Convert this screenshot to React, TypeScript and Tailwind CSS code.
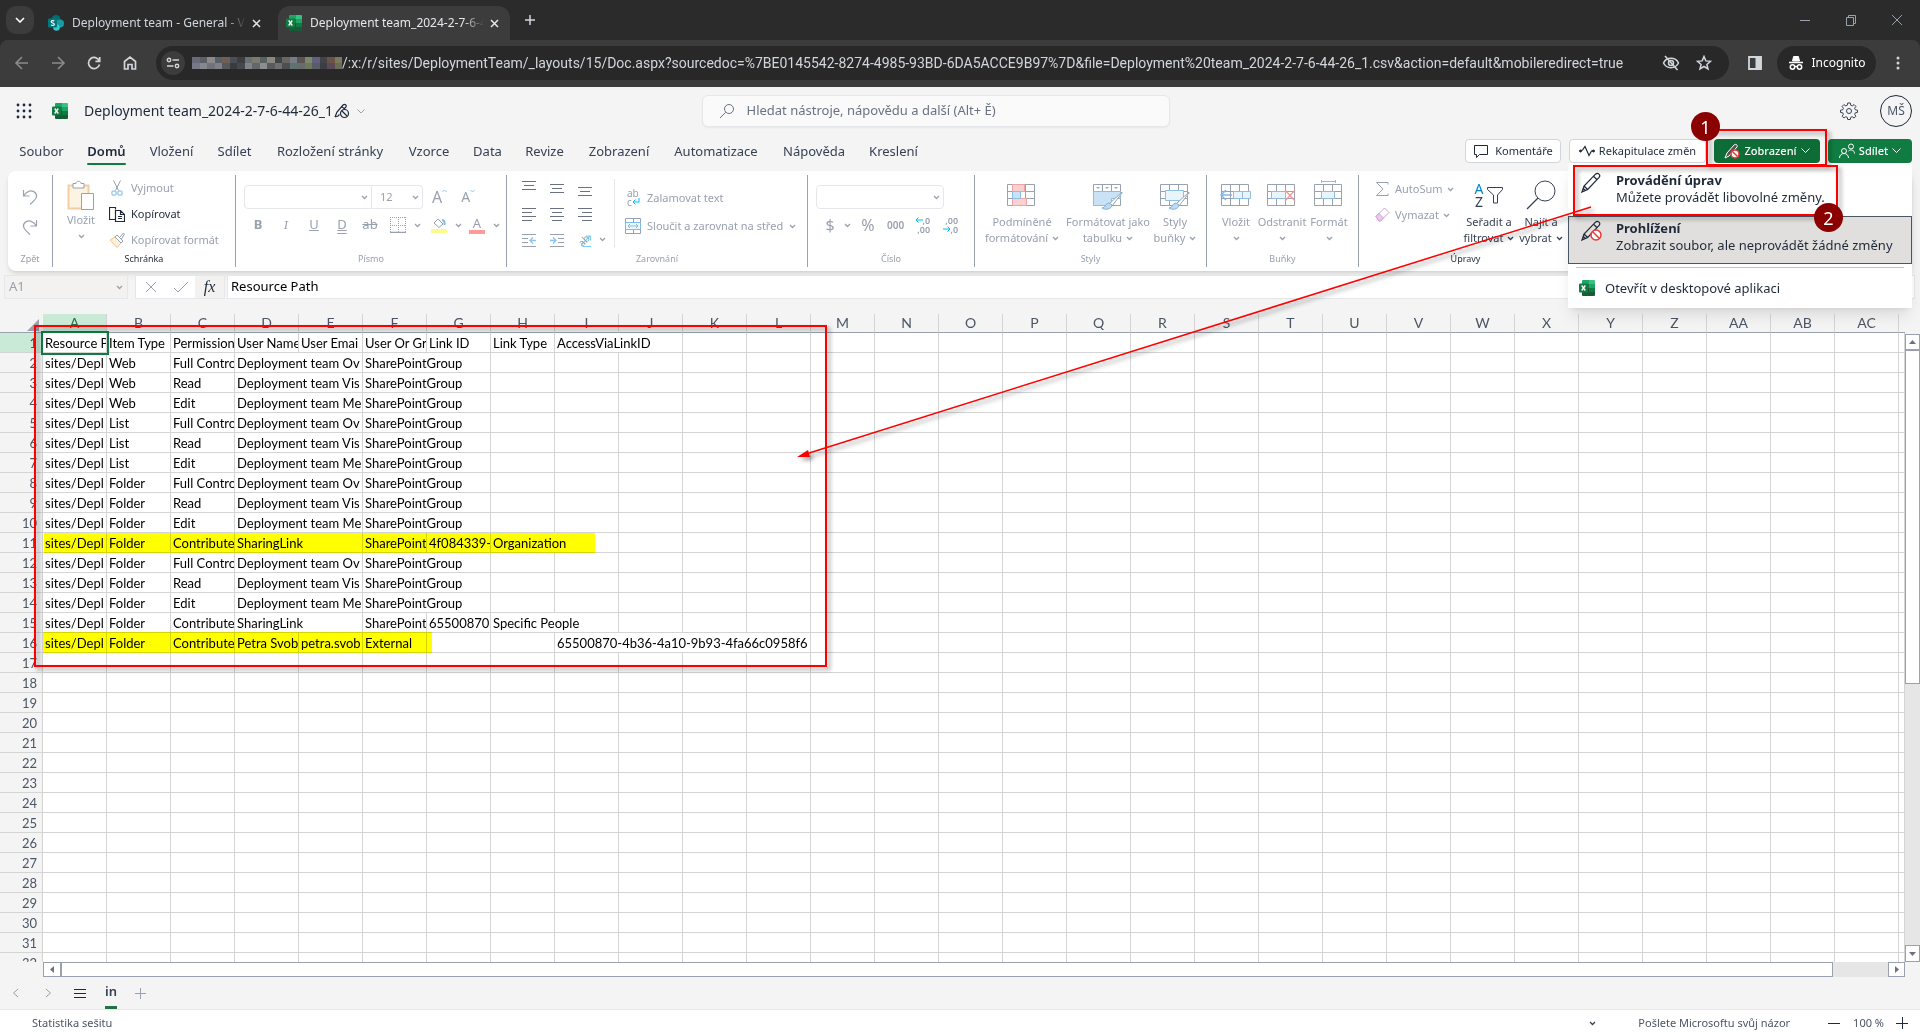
import type { ReactNode } from "react";

/* ---------- small shared pieces ---------- */

function Icon({
  w = 16,
  h = 16,
  className = "",
  children,
}: {
  w?: number;
  h?: number;
  className?: string;
  children: ReactNode;
}) {
  return (
    <svg
      width={w}
      height={h}
      viewBox={`0 0 ${w} ${h}`}
      fill="none"
      stroke="currentColor"
      strokeWidth="1"
      className={`shrink-0 ${className}`}
      aria-hidden="true"
    >
      {children}
    </svg>
  );
}

function Chevron({ className = "text-gray-400" }: { className?: string }) {
  return (
    <Icon w={7} h={5} className={className}>
      <path d="M1 1l2.500 2.500L6 1" strokeWidth="1.300" />
    </Icon>
  );
}

function ExcelLogo() {
  return (
    <Icon>
      <g stroke="none">
        <path d="M4 0h6v4H3V1a1 1 0 0 1 1-1z" fill="#21a366" />
        <path d="M10 0h5a1 1 0 0 1 1 1v3h-6z" fill="#33c481" />
        <path d="M3 4h7v4H3z" fill="#107c41" />
        <path d="M10 4h6v4h-6z" fill="#21a366" />
        <path d="M3 8h7v4H3z" fill="#185c37" />
        <path d="M10 8h6v4h-6z" fill="#107c41" />
        <path d="M3 12h13v3a1 1 0 0 1-1 1H4a1 1 0 0 1-1-1z" fill="#185c37" />
        <rect y="3.500" width="9" height="9" rx="1" fill="#107c41" />
      </g>
      <path d="M2.700 5.500l3.600 5M6.300 5.500l-3.600 5" stroke="#fff" strokeWidth="1.400" />
    </Icon>
  );
}

function SharePointLogo() {
  return (
    <Icon>
      <g stroke="none">
        <circle cx="8" cy="4.500" r="4.500" fill="#036c70" />
        <circle cx="12" cy="8.500" r="4" fill="#1a9ba1" />
        <circle cx="8.500" cy="12.500" r="3.300" fill="#37c6d0" />
        <rect y="3.500" width="9" height="9" rx="1" fill="#03787c" />
      </g>
      <path
        d="M6.300 6C5.500 5.300 3.200 5.300 3.200 6.800c0 1.600 3.100.8 3.100 2.500 0 1.500-2.500 1.400-3.300.6"
        stroke="#fff"
        strokeWidth="1.200"
      />
    </Icon>
  );
}

function Pencil({ blocked = false }: { blocked?: boolean }) {
  return (
    <Icon w={21} h={21}>
      <path
        d="M1 20l2-6L14.500 2.200c2.500-2.200 5.500.8 3.600 3.200L6.700 17.500 1 20zM3 14l3.700 3.500M12.500 4.300l3.600 3.500M1 20l3.500-1.500-2-2z"
        strokeWidth="1.200"
      />
      {blocked && (
        <g stroke="#e53935">
          <circle cx="15" cy="15" r="5" fill="#fff" strokeWidth="1.500" />
          <path d="M11.500 11.500l7 7" strokeWidth="1.500" />
        </g>
      )}
    </Icon>
  );
}

/* ---------- browser window ---------- */

function BrowserTab({
  icon,
  title,
  active = false,
}: {
  icon: ReactNode;
  title: string;
  active?: boolean;
}) {
  return (
    <div
      className={`flex h-[34px] w-[232px] items-center rounded-t-xl px-2 ${
        active ? "bg-[#3c3c3c] text-gray-200" : "text-gray-300"
      }`}
    >
      {icon}
      <span className="ml-2 w-[174px] overflow-hidden text-xs whitespace-nowrap [mask-image:linear-gradient(to_right,black_88%,transparent)]">
        {title}
      </span>
      <button aria-label="Close tab" className="ml-[6px] text-gray-200">
        <Icon w={9} h={9}>
          <path d="M1 1l7 7M8 1L1 8" strokeWidth="1.500" />
        </Icon>
      </button>
    </div>
  );
}

const mosaic = [
  "#6b6878", "#5c5f66", "#8a8a8c", "#57606b", "#6f5f58", "#4a4f55", "#3c3d3f", "#6a6f78", "#7d7a70", "#56635e",
  "#8a8780", "#3f4347", "#6a6560", "#777b84", "#5a5550", "#7a8a6c", "#62607a", "#424348", "#6b5348", "#7a7a5e",
  "#7a7888", "#86898c", "#70747a", "#7e8288", "#55585c", "#3a3b3d", "#46484c", "#80848a", "#63676a", "#8b8f94",
  "#5c5a58", "#6c7074", "#4c4e50", "#5e7470", "#6a6a6c", "#6c7a5c", "#5a5d66", "#3c3d40", "#5a4a58", "#6c6a58",
];

function Browser() {
  return (
    <header className="shrink-0 bg-[#2b2b2b] text-gray-300">
      <div className="flex h-10 items-end pl-[6px]">
        <button
          aria-label="Search tabs"
          className="mb-[6px] flex size-7 items-center justify-center rounded-[10px] bg-[#3c3c3c]"
        >
          <Icon w={10} h={6} className="text-white">
            <path d="M1 1l4 4 4-4" strokeWidth="1.600" />
          </Icon>
        </button>
        <div className="ml-[6px] flex gap-[6px]">
          <BrowserTab icon={<SharePointLogo />} title="Deployment team - General - V" />
          <BrowserTab icon={<ExcelLogo />} title="Deployment team_2024-2-7-6-4" active />
        </div>
        <button aria-label="New tab" className="mb-[14px] ml-[14px]">
          <Icon w={12} h={12}>
            <path d="M6 1v10M1 6h10" strokeWidth="1.500" />
          </Icon>
        </button>
        <div className="mr-[17px] mb-[14px] ml-auto flex gap-[34px] text-gray-400">
          <button aria-label="Minimize">
            <Icon w={12} h={12}>
              <path d="M1 6.500h10" />
            </Icon>
          </button>
          <button aria-label="Restore">
            <Icon w={12} h={12}>
              <path d="M1.500 3.500h7v8h-7zM3.500 3.500v-2h7v8h-2" />
            </Icon>
          </button>
          <button aria-label="Close">
            <Icon w={12} h={12}>
              <path d="M1 1l10 10M11 1L1 11" />
            </Icon>
          </button>
        </div>
      </div>

      <div className="flex h-[47px] items-center rounded-t-lg bg-[#3c3c3c] pb-[1px] pl-[14px]">
        <div className="flex gap-5">
          <button aria-label="Back" className="text-[#8a8a8a]">
            <Icon>
              <path d="M14 8H2M8 2L2 8l6 6" strokeWidth="1.600" />
            </Icon>
          </button>
          <button aria-label="Forward" className="text-[#8a8a8a]">
            <Icon>
              <path d="M2 8h12M8 2l6 6-6 6" strokeWidth="1.600" />
            </Icon>
          </button>
          <button aria-label="Reload">
            <Icon>
              <path d="M13.300 6A5.600 5.600 0 1 0 13.500 9.500M13.700 2v4.300H9.400" strokeWidth="1.700" />
            </Icon>
          </button>
          <button aria-label="Home">
            <Icon>
              <path d="M2.500 14V6.500L8 2l5.500 4.500V14H10V9.500H6V14z" strokeWidth="1.700" />
            </Icon>
          </button>
        </div>
        <div className="ml-[18px] flex h-[34px] min-w-0 flex-1 items-center rounded-full bg-[#282828] pr-[17px] pl-[5px]">
          <span className="mr-[7px] flex size-6 shrink-0 items-center justify-center rounded-full bg-[#3c3c3c]">
            <Icon w={14} h={12}>
              <circle cx="3" cy="3" r="1.700" strokeWidth="1.400" />
              <circle cx="11" cy="9" r="1.700" strokeWidth="1.400" />
              <path d="M6.500 3H13M1 9h6.500" strokeWidth="1.400" />
            </Icon>
          </span>
          <span className="grid w-[150px] shrink-0 grid-cols-20 grid-rows-[6px_6px]">
            {mosaic.map((color, i) => (
              <span key={i} style={{ backgroundColor: color }} />
            ))}
          </span>
          <span className="overflow-hidden font-['Roboto','Noto_Sans',sans-serif] text-sm whitespace-nowrap">
            /:x:/r/sites/DeploymentTeam/_layouts/15/Doc.aspx?sourcedoc=%7BE0145542-8274-4985-93BD-6DA5ACCE9B97%7D&amp;file=Deployment%20team_2024-2-7-6-44-26_1.csv&amp;action=default&amp;mobileredirect=true
          </span>
          <button aria-label="Third-party cookies blocked" className="ml-auto">
            <Icon w={18} h={16}>
              <path d="M1.500 8C4.500 1.800 13.500 1.800 16.500 8c-3 6.200-12 6.200-15 0z" strokeWidth="1.500" />
              <circle cx="9" cy="8" r="2.500" strokeWidth="1.500" />
              <path d="M3 1l12.500 14" strokeWidth="1.600" />
            </Icon>
          </button>
          <button aria-label="Bookmark" className="ml-4">
            <Icon>
              <path
                d="M8 1.500l1.800 4.400 4.700.4-3.600 3.100 1.100 4.600L8 11.500 4 14l1.100-4.600L1.500 6.300l4.700-.4z"
                strokeWidth="1.500"
              />
            </Icon>
          </button>
        </div>
        <button aria-label="Side panel" className="ml-[18px]">
          <Icon>
            <path d="M2 2h12v12H2z" strokeWidth="1.800" />
            <path d="M9 2h5v12H9z" fill="currentColor" />
          </Icon>
        </button>
        <div className="ml-[14px] flex h-[34px] w-[99px] items-center justify-center gap-2 rounded-full bg-[#282828] text-xs text-white">
          <Icon>
            <path d="M4.500 6L5.600 1.500h4.800L11.500 6z" fill="currentColor" />
            <path d="M1 7.500h14" strokeWidth="1.500" />
            <circle cx="4.500" cy="12" r="2.200" strokeWidth="1.500" />
            <circle cx="11.500" cy="12" r="2.200" strokeWidth="1.500" />
            <path d="M6.500 11.500h3" strokeWidth="1.500" />
          </Icon>
          Incognito
        </div>
        <button aria-label="Menu" className="mx-5">
          <Icon w={4} h={16}>
            <g fill="currentColor" stroke="none">
              <circle cx="2" cy="3" r="1.500" />
              <circle cx="2" cy="8" r="1.500" />
              <circle cx="2" cy="13" r="1.500" />
            </g>
          </Icon>
        </button>
      </div>
    </header>
  );
}

/* ---------- title row and ribbon tabs ---------- */

function TitleRow() {
  return (
    <div className="flex h-12 shrink-0 items-center pr-2 pl-4">
      <button aria-label="App launcher">
        <Icon className="text-gray-800">
          <g fill="currentColor" stroke="none">
            {[2, 8, 14].map((y) =>
              [2, 8, 14].map((x) => <circle key={`${x}-${y}`} cx={x} cy={y} r="1.400" />)
            )}
          </g>
        </Icon>
      </button>
      <span className="ml-5 flex">
        <ExcelLogo />
      </span>
      <button className="ml-4 flex w-[281px] items-center text-sm whitespace-nowrap text-gray-800">
        <span className="w-[250px] text-left">Deployment team_2024-2-7-6-44-26_1</span>
        <Icon>
          <path d="M1 14l2-5 6-7c2-1.500 4 0 3 2l-2 2M1 14l3-1 1.500-1.500M8 4l3 2" strokeWidth="1.200" />
          <circle cx="10.500" cy="10.500" r="4" strokeWidth="1.200" />
          <path d="M8 8l5 5" strokeWidth="1.200" />
        </Icon>
        <Icon w={8} h={5} className="ml-[7px] text-gray-400">
          <path d="M.5.500L4 4 7.500.500" />
        </Icon>
      </button>
      <label className="mx-auto flex h-8 w-[468px] items-center rounded-md border border-gray-200 bg-[#fafafa] pl-4 shadow-xs">
        <Icon className="text-gray-500">
          <circle cx="10" cy="6" r="4.500" />
          <path d="M6.700 9.300L1 15" />
        </Icon>
        <input
          aria-label="Hledat"
          placeholder="Hledat nástroje, nápovědu a další (Alt+ Ě)"
          className="ml-3 w-full text-[13px] outline-none placeholder:text-gray-500"
        />
      </label>
      <span className="w-[334px]" />
      <button aria-label="Nastavení" className="mr-[22px]">
        <Icon w={18} h={18} className="text-gray-700">
          <circle cx="9" cy="9" r="2.500" />
          <path d="M7.700 1h2.600l.4 2.200 1.500.7 1.900-1.300 1.800 1.800-1.300 1.900.7 1.500 2.200.4v2.200l-2.200.4-.7 1.500 1.300 1.900-1.800 1.800-1.900-1.300-1.500.7-.4 2.100H7.700l-.4-2.100-1.500-.7-1.900 1.300-1.800-1.800 1.300-1.900-.7-1.500-2.200-.4V8.200l2.200-.4.7-1.500-1.300-1.900 1.800-1.800 1.900 1.300 1.500-.7z" />
        </Icon>
      </button>
      <button className="size-8 rounded-full border border-gray-800 text-xs text-gray-600">MŠ</button>
    </div>
  );
}

const ribbonTabs = [
  { name: "Soubor", width: "w-[67px]" },
  { name: "Domů", width: "w-[63px]" },
  { name: "Vložení", width: "w-[67px]" },
  { name: "Sdílet", width: "w-[59px]" },
  { name: "Rozložení stránky", width: "w-[132px]" },
  { name: "Vzorce", width: "w-[66px]" },
  { name: "Data", width: "w-[51px]" },
  { name: "Revize", width: "w-[63px]" },
  { name: "Zobrazení", width: "w-[86px]" },
  { name: "Automatizace", width: "w-[108px]" },
  { name: "Nápověda", width: "w-[88px]" },
  { name: "Kreslení", width: "w-[71px]" },
];

function ViewMenu() {
  return (
    <div
      role="menu"
      className="absolute top-full right-0 z-20 w-[344px] bg-white text-[13px] leading-[17px] text-gray-800 shadow-lg"
    >
      <button role="menuitem" className="flex h-[53px] w-full gap-[14px] px-[13px] pt-[9px] text-left">
        <Pencil />
        <span>
          <b className="block">Provádění úprav</b>
          Můžete provádět libovolné změny.
        </span>
      </button>
      <button
        role="menuitem"
        className="flex h-12 w-full gap-[14px] border border-gray-600 bg-[#e1dfdd] px-3 pt-[3px] text-left"
      >
        <Pencil blocked />
        <span className="whitespace-nowrap">
          <b className="block">Prohlížení</b>
          Zobrazit soubor, ale neprovádět žádné změny
        </span>
      </button>
      <hr className="mx-2 mt-[3px] border-[#c4c4c4]" />
      <button role="menuitem" className="flex h-10 w-full items-center gap-[10px] px-[11px]">
        <ExcelLogo />
        Otevřít v desktopové aplikaci
      </button>
    </div>
  );
}

function RibbonTabs() {
  return (
    <div className="flex h-9 shrink-0 items-center pr-2 pl-2">
      <nav className="flex">
        {ribbonTabs.map((tab) => (
          <button
            key={tab.name}
            className={`relative h-9 pb-[2px] text-[13px] whitespace-nowrap ${tab.width} ${
              tab.name === "Domů" ? "font-semibold text-gray-800" : "text-gray-700"
            }`}
          >
            {tab.name}
            {tab.name === "Domů" && (
              <span className="absolute inset-x-3 bottom-[6px] h-[2px] rounded bg-[#107c41]" />
            )}
          </button>
        ))}
      </nav>
      <div className="relative mb-1 ml-auto flex gap-2 text-[11px] whitespace-nowrap text-gray-800">
        <button className="flex h-6 w-24 items-center justify-center gap-[6px] rounded border border-gray-300 bg-white">
          <Icon>
            <path d="M1.500 2.500h13v9h-8l-3 3v-3h-2z" />
          </Icon>
          Komentáře
        </button>
        <button className="flex h-6 w-[137px] items-center justify-center gap-1 rounded border border-gray-300 bg-white">
          <Icon>
            <path d="M1 8l2.500-1L6 3.500l4 9L12.500 8H15" strokeWidth="1.200" />
            <circle cx="1.500" cy="8" r="1" fill="currentColor" />
            <circle cx="14.500" cy="8" r="1" fill="currentColor" />
          </Icon>
          Rekapitulace změn
        </button>
        <button
          aria-haspopup="menu"
          className="flex h-6 w-[106px] items-center justify-center gap-1 rounded bg-[#0e6c37] font-medium text-white"
        >
          <Icon>
            <path d="M1 15l2-5 7-8c2-1.500 4 0 3 2l-8 9z" fill="#555" />
            <circle cx="11" cy="11" r="4" fill="#fff" stroke="#e53935" strokeWidth="1.500" />
            <path d="M8.200 8.200l5.600 5.600" stroke="#e53935" strokeWidth="1.500" />
          </Icon>
          Zobrazení
          <Icon w={9} h={6}>
            <path d="M.5.500l4 4 4-4" />
          </Icon>
        </button>
        <button className="flex h-6 w-[84px] items-center justify-center gap-1 rounded bg-[#107c41] font-medium text-white">
          <Icon>
            <circle cx="5" cy="8" r="2.500" />
            <path d="M.5 15c0-6 9-6 9 0" />
            <circle cx="12" cy="3.500" r="2.500" />
            <path d="M9.500 8c2-2 6-1 6 2.500" />
          </Icon>
          Sdílet
          <Icon w={9} h={6}>
            <path d="M.5.500l4 4 4-4" />
          </Icon>
        </button>
        <ViewMenu />
      </div>
    </div>
  );
}

/* ---------- ribbon ---------- */

function Group({
  label,
  width,
  dark = false,
  last = false,
  children,
}: {
  label: string;
  width: string;
  dark?: boolean;
  last?: boolean;
  children: ReactNode;
}) {
  return (
    <section className={`flex shrink-0 flex-col ${width} ${last ? "" : "border-r border-gray-400"}`}>
      <div className="flex min-h-0 flex-1 items-start">{children}</div>
      <h2 className={`h-4 text-center text-[9px] leading-4 ${dark ? "text-gray-800" : "text-gray-400"}`}>
        {label}
      </h2>
    </section>
  );
}

function BigButton({
  icon,
  lines,
  width,
  dark = false,
}: {
  icon: ReactNode;
  lines: string[];
  width: string;
  dark?: boolean;
}) {
  return (
    <button
      className={`flex shrink-0 flex-col items-center leading-4 whitespace-nowrap ${width} ${
        dark ? "text-gray-700" : "text-gray-400"
      }`}
    >
      <span className="flex h-[39px] items-center">{icon}</span>
      <span>{lines[0]}</span>
      <span className="flex h-4 items-center gap-1">
        {lines[1]}
        <Chevron className={dark ? "text-gray-700" : "text-gray-400"} />
      </span>
    </button>
  );
}

function CellsIcon({ children }: { children?: ReactNode }) {
  return (
    <Icon w={32} h={30} className="text-gray-400">
      <path d="M1.500 4.500h27v21h-27zM1.500 11.500h27M1.500 18.500h27M10.500 4.500v21M19.500 4.500v21" />
      {children}
    </Icon>
  );
}

function Brush() {
  return (
    <g>
      <path d="M30 12L17 24l3 2 10-13z" fill="#fff" stroke="#9ca3af" />
      <path d="M17 23c-4 0-3 5-7 5 3 2 9 2 10-3z" fill="#bddaf2" stroke="#7fb2dc" />
    </g>
  );
}

// every row is [x1, x2, y] of one stroke
function Lines({ label, rows }: { label: string; rows: [number, number, number][] }) {
  return (
    <button aria-label={label} className="flex h-[26px] w-7 items-center justify-center text-gray-500">
      <Icon>
        {rows.map(([x1, x2, y]) => (
          <path key={y} d={`M${x1} ${y + 0.5}H${x2}`} />
        ))}
      </Icon>
    </button>
  );
}

function Ribbon() {
  return (
    <div className="mx-2 flex h-[100px] shrink-0 rounded-lg bg-white py-1 text-[11px] text-gray-400 shadow-md">
      <Group label="Zpět" width="w-[45px]">
        <div className="flex w-full flex-col items-center gap-[14px] pt-[14px]">
          <button aria-label="Zpět">
            <Icon>
              <path d="M1.500 1v6h6M1.500 7C5 1.500 10 .500 13 3.500s2 6-5 12" strokeWidth="1.200" />
            </Icon>
          </button>
          <button aria-label="Znovu">
            <Icon>
              <path d="M14.500 1v6h-6M14.500 7C11 1.500 6 .500 3 3.500s-2 6 5 12" strokeWidth="1.200" />
            </Icon>
          </button>
        </div>
      </Group>

      <Group label="Schránka" width="w-[183px]" dark>
        <button className="flex w-[56px] flex-col items-center pt-[5px]">
          <Icon w={28} h={32}>
            <path d="M1.500 5.500h20v23h-20z" fill="#fdf3e3" stroke="#f3cfa0" strokeWidth="2" />
            <path d="M6 8V3.500h3c0-3 5-3 5 0h3V8z" fill="#fff" />
            <path d="M14.500 13.500h12v16h-12z" fill="#fff" />
          </Icon>
          <span className="leading-4">Vložit</span>
          <span className="flex h-4 items-center">
            <Chevron />
          </span>
        </button>
        <div className="flex flex-col">
          <button className="flex h-[26px] items-center gap-[6px]">
            <Icon>
              <path d="M4.500.500l5 10M11.500.500l-5 10" />
              <g stroke="#9cc8ea" strokeWidth="1.300">
                <circle cx="5" cy="13" r="2.200" />
                <circle cx="11" cy="13" r="2.200" />
              </g>
            </Icon>
            Vyjmout
          </button>
          <button className="flex h-[26px] items-center gap-[6px] text-gray-800">
            <Icon>
              <path
                d="M7 13.500H.5V1.500h6v2M6.500 4.500h5l4 4v7h-9zM11.500 4.500v4h4M9 10.500h4M9 12.500h4"
                strokeWidth="1.200"
              />
            </Icon>
            Kopírovat
          </button>
          <button className="flex h-[26px] items-center gap-[6px] whitespace-nowrap">
            <Icon>
              <path d="M1 8l5-3 6 6-4 4.500z" fill="#fdf0dc" stroke="#f0c08a" />
              <path d="M6 5l2-2 6 6-2 2zM11 5l3.500-4 1 1L12.500 7" fill="#fff" />
            </Icon>
            Kopírovat formát
          </button>
        </div>
      </Group>

      <Group label="Písmo" width="w-[271px]">
        <div className="flex w-full flex-col pt-[10px] pl-2">
          <div className="flex h-6 items-center">
            <button
              aria-label="Písmo"
              className="flex h-6 w-32 items-center justify-end rounded-l border border-gray-200 pr-[3px]"
            >
              <Chevron />
            </button>
            <button
              aria-label="Velikost písma"
              className="flex h-6 w-[51px] items-center justify-between rounded-r border border-l-0 border-gray-200 pr-[3px] pl-2"
            >
              12 <Chevron />
            </button>
            <button aria-label="Zvětšit písmo" className="ml-[9px] flex items-start text-base leading-4">
              A
              <Icon w={5} h={4} className="text-sky-300">
                <path d="M.5 3l2-2 2 2" />
              </Icon>
            </button>
            <button aria-label="Zmenšit písmo" className="ml-[14px] flex items-start text-sm leading-4">
              A
              <Icon w={5} h={4} className="text-sky-300">
                <path d="M.5 1l2 2 2-2" />
              </Icon>
            </button>
          </div>
          <div className="flex h-8 items-center text-[13px]">
            <button className="w-7 font-bold">B</button>
            <button className="w-7 font-serif italic">I</button>
            <button className="w-7 underline">U</button>
            <button className="w-7 underline decoration-double">D</button>
            <button className="w-7 line-through">ab</button>
            <button aria-label="Ohraničení" className="ml-[6px] flex items-center gap-2">
              <Icon>
                <path d="M.5 0v15M8.500 0v15M15.500 0v15M0 .500h16M0 8.500h16" strokeDasharray="1 1" />
                <path d="M0 15.500h16" strokeWidth="1.500" />
              </Icon>
              <Chevron />
            </button>
            <button aria-label="Barva výplně" className="ml-[10px] flex items-center gap-2">
              <Icon>
                <path d="M3 6l4-4 5 5-4 3.500z" fill="#fff" />
                <path d="M11 3c2 0 3 2 2.500 5" stroke="#7fb8e6" strokeWidth="2" />
                <path d="M0 14h16" stroke="#fdfa8e" strokeWidth="4" />
              </Icon>
              <Chevron />
            </button>
            <button aria-label="Barva písma" className="ml-[7px] flex items-center gap-2">
              <span className="w-4 border-b-4 border-[#ff9a9a] text-center leading-[13px]">A</span>
              <Chevron />
            </button>
          </div>
        </div>
      </Group>

      <Group label="Zarovnání" width="w-[301px]">
        <div className="ml-2 grid grid-cols-[repeat(3,28px)] grid-rows-[repeat(3,26px)]">
          <Lines label="Zarovnat nahoru" rows={[[1, 15, 1], [3, 13, 5], [1, 15, 9]]} />
          <Lines label="Zarovnat na střed svisle" rows={[[1, 15, 4], [3, 13, 8], [1, 15, 12]]} />
          <Lines label="Zarovnat dolů" rows={[[1, 15, 7], [3, 13, 11], [1, 15, 15]]} />
          <Lines label="Vlevo" rows={[[1, 15, 2], [1, 11, 6], [1, 15, 10], [1, 11, 14]]} />
          <Lines label="Na střed" rows={[[1, 15, 2], [3, 13, 6], [1, 15, 10], [3, 13, 14]]} />
          <Lines label="Vpravo" rows={[[1, 15, 2], [5, 15, 6], [1, 15, 10], [5, 15, 14]]} />
          <button aria-label="Zmenšit odsazení" className="flex items-center justify-center">
            <Icon>
              <path d="M1 2.500h14M1 6.500h6M1 10.500h6M1 14.500h14" />
              <path d="M15 8.500H9.500M12 5.500l-3 3 3 3" stroke="#8cc4ee" strokeWidth="1.300" />
            </Icon>
          </button>
          <button aria-label="Zvětšit odsazení" className="flex items-center justify-center">
            <Icon>
              <path d="M1 2.500h14M9 6.500h6M9 10.500h6M1 14.500h14" />
              <path d="M1 8.500h5.500M4 5.500l3 3-3 3" stroke="#8cc4ee" strokeWidth="1.300" />
            </Icon>
          </button>
          <button aria-label="Orientace" className="flex items-center justify-center text-[10px]">
            <span className="-mr-2 -rotate-45">ab</span>
            <Icon w={11} h={16} className="text-sky-300">
              <path d="M0 13l9-9M5 4h4.500v4.500M2 14.500h8" strokeWidth="1.200" />
            </Icon>
          </button>
        </div>
        <span className="mt-[62px]">
          <Chevron />
        </span>
        <div className="mt-1 ml-2 h-[68px] w-px bg-gray-200" />
        <div className="ml-[10px] flex flex-col pt-[9px] whitespace-nowrap">
          <button className="flex h-7 items-center gap-[6px]">
            <span className="w-4 pl-[2px] text-left text-[10px] leading-[9px]">
              <span className="block">ab</span>
              <span className="flex">
                c
                <Icon w={8} h={8} className="text-sky-400">
                  <path d="M7 0v4H1M3.500 1.500L1 4l2.500 2.500" />
                </Icon>
              </span>
            </span>
            Zalamovat text
          </button>
          <button className="flex h-7 items-center gap-[6px]">
            <Icon>
              <path d="M.5.500h15v15H.5zM.5 4.500h15M.5 11.500h15M8.500.500v4M8.500 11.500v4" />
              <path d="M.5 4.500h15v7H.5zM3 8h10M5 6L3 8l2 2M11 6l2 2-2 2" stroke="#7dbdea" fill="#f0f8fe" />
            </Icon>
            Sloučit a zarovnat na střed
            <Chevron />
          </button>
        </div>
      </Group>

      <Group label="Číslo" width="w-[167px]">
        <div className="flex w-full flex-col pt-[10px] pl-2">
          <button
            aria-label="Formát čísla"
            className="flex h-6 w-32 items-center justify-end rounded border border-gray-200 pr-[3px]"
          >
            <Chevron />
          </button>
          <div className="flex h-8 items-center text-base">
            <button className="w-7">$</button>
            <Chevron />
            <button className="ml-[6px] w-[22px]">%</button>
            <button className="ml-2 text-[10px] font-semibold">000</button>
            <button className="ml-[10px] flex w-4 flex-col items-end text-[9px] leading-[9px] font-semibold">
              <span className="flex">
                <Icon w={8} h={8} className="text-sky-400">
                  <path d="M8 4H1M3.500 1.500L1 4l2.500 2.500" />
                </Icon>
                ,0
              </span>
              <span>,00</span>
            </button>
            <button className="ml-3 flex w-4 flex-col items-end text-[9px] leading-[9px] font-semibold">
              <span>,00</span>
              <span className="flex">
                <Icon w={8} h={8} className="text-sky-400">
                  <path d="M0 4h7M4.500 1.500L7 4 4.500 6.500" />
                </Icon>
                ,0
              </span>
            </button>
          </div>
        </div>
      </Group>

      <Group label="Styly" width="w-[232px]">
        <BigButton
          width="w-[94px]"
          lines={["Podmíněné", "formátování"]}
          icon={
            <CellsIcon>
              <g stroke="#f2a3a3" fill="#fbd0d0">
                <path d="M6.500 4.500h12v7h-12zM6.500 18.500h14v7h-14z" />
              </g>
              <path d="M6.500 11.500h8v7h-8z" stroke="#8dbfe4" fill="#c9e2f6" />
            </CellsIcon>
          }
        />
        <BigButton
          width="w-[78px]"
          lines={["Formátovat jako", "tabulku"]}
          icon={
            <CellsIcon>
              <path d="M1.500 11.500h27v7h-9v7h-18z" stroke="#8dbfe4" fill="#c9e2f6" />
              <path d="M4 7h4l-2 2zM13 7h4l-2 2zM22 7h4l-2 2z" fill="#7fb2dc" stroke="none" />
              <Brush />
            </CellsIcon>
          }
        />
        <BigButton
          width="w-[56px]"
          lines={["Styly", "buňky"]}
          icon={
            <CellsIcon>
              <path d="M6.500 10.500h18v10h-18z" stroke="#8dbfe4" fill="#eaf4fc" />
              <Brush />
            </CellsIcon>
          }
        />
      </Group>

      <Group label="Buňky" width="w-[152px]">
        <BigButton
          width="w-[58px]"
          lines={["Vložit", ""]}
          icon={
            <CellsIcon>
              <path d="M13.500 11.500h17v7h-17zM22.500 11.500v7" stroke="#8dbfe4" fill="#eaf4fc" />
              <path d="M12 15H1M6 10l-5 5 5 5" stroke="#7fb8e6" strokeWidth="1.500" />
            </CellsIcon>
          }
        />
        <BigButton
          width="w-[34px]"
          lines={["Odstranit", ""]}
          icon={
            <CellsIcon>
              <path d="M5.500 11.500h14v7h-14z" stroke="#8dbfe4" fill="#eaf4fc" />
              <path d="M19 10l10 11M29 10L19 21" stroke="#f09a9a" strokeWidth="1.300" />
            </CellsIcon>
          }
        />
        <BigButton
          width="w-[60px]"
          lines={["Formát", ""]}
          icon={
            <CellsIcon>
              <path d="M8.500 11.500h13v7h-13z" stroke="#8dbfe4" fill="#eaf4fc" />
              <path d="M8 1.500h14M8.500 0v3M22.500 0v3" stroke="#8dbfe4" />
            </CellsIcon>
          }
        />
      </Group>

      <Group label="Úpravy" width="w-[213px]" dark last>
        <div className="flex w-[100px] flex-col pl-4">
          <button className="flex h-7 items-center gap-1 whitespace-nowrap">
            <Icon>
              <path d="M13 3.500V1.500H1.500L8 8l-6.500 6.500H13v-2" />
            </Icon>
            AutoSum
            <Chevron />
          </button>
          <button className="flex h-6 items-center gap-1 whitespace-nowrap">
            <Icon>
              <path d="M1 9.500L9.500 1l4.500 4.500L5.500 14H4z" stroke="#d3a0d8" />
              <path d="M1 9.500L4 6.500 8.500 11l-3 3H4z" fill="#ecc9ef" stroke="#d3a0d8" />
            </Icon>
            Vymazat
            <Chevron />
          </button>
        </div>
        <BigButton
          width="w-[60px]"
          dark
          lines={["Seřadit a", "filtrovat"]}
          icon={
            <span className="flex items-center gap-1">
              <span className="text-sm leading-[13px]">
                <span className="block text-sky-600">A</span>Z
              </span>
              <Icon w={16} h={18}>
                <path d="M.5 1.500h15v2L10.500 9v8h-4V9l-6-5.500z" />
              </Icon>
            </span>
          }
        />
        <BigButton
          width="w-[44px]"
          dark
          lines={["Najít a", "vybrat"]}
          icon={
            <Icon w={30} h={30}>
              <circle cx="19" cy="11" r="10" />
              <path d="M12 18L1 29" strokeWidth="1.200" />
            </Icon>
          }
        />
      </Group>
    </div>
  );
}

function FormulaBar() {
  return (
    <div className="mt-1 flex h-6 shrink-0 pr-[5px] pl-1 text-[13px] text-black">
      <div className="flex w-[124px] items-center justify-between border border-gray-200 bg-[#f3f2f1] px-1">
        <input aria-label="Pole názvů" disabled value="A1" className="w-16 text-gray-400" />
        <Chevron />
      </div>
      <div className="ml-[7px] flex w-[90px] border border-gray-200 bg-white text-gray-400">
        <button aria-label="Zrušit" className="flex w-[30px] items-center justify-center">
          <Icon w={12} h={12}>
            <path d="M1 1l10 10M11 1L1 11" />
          </Icon>
        </button>
        <button aria-label="Zadat" className="flex w-[29px] items-center justify-center">
          <Icon>
            <path d="M1 9l4 4L15 3" />
          </Icon>
        </button>
        <button className="flex-1 bg-[#f3f2f1] font-['Liberation_Serif',serif] text-base leading-4 text-gray-800 italic">
          fx
        </button>
      </div>
      <input
        aria-label="Řádek vzorců"
        defaultValue="Resource Path"
        className="ml-[2px] flex-1 border border-gray-200 bg-white px-[3px] outline-none"
      />
    </div>
  );
}

/* ---------- sheet ---------- */

const columns = [..."ABCDEFGHIJKLMNOPQRSTUVWXYZ", "AA", "AB", "AC"];

type Cell = string | [string, number];

// a [text, span] cell runs over its empty neighbours
const team = (type: string, level: string, who: string): Cell[] => [
  "sites/Depl",
  type,
  level,
  [`Deployment team ${who}`, 2],
  ["SharePointGroup", 2],
];

const rows: Cell[][] = [
  [
    "Resource P",
    "Item Type",
    "Permission",
    "User Name",
    "User Emai",
    "User Or Gr",
    "Link ID",
    "Link Type",
    ["AccessViaLinkID", 2],
  ],
  team("Web", "Full Contro", "Ov"),
  team("Web", "Read", "Vis"),
  team("Web", "Edit", "Me"),
  team("List", "Full Contro", "Ov"),
  team("List", "Read", "Vis"),
  team("List", "Edit", "Me"),
  team("Folder", "Full Contro", "Ov"),
  team("Folder", "Read", "Vis"),
  team("Folder", "Edit", "Me"),
  ["sites/Depl", "Folder", "Contribute", ["SharingLink", 2], "SharePoint", "4f084339-", ["Organization", 2]],
  team("Folder", "Full Contro", "Ov"),
  team("Folder", "Read", "Vis"),
  team("Folder", "Edit", "Me"),
  ["sites/Depl", "Folder", "Contribute", ["SharingLink", 2], "SharePoint", "65500870-", ["Specific People", 2]],
  [
    "sites/Depl",
    "Folder",
    "Contribute",
    "Petra Svob",
    "petra.svob",
    "External",
    "",
    "",
    ["65500870-4b36-4a10-9b93-4fa66c0958f6", 4],
  ],
];

function SheetRow({ index }: { index: number }) {
  const cells = rows[index] ?? [];
  const used = cells.reduce((sum, c) => sum + (typeof c === "string" ? 1 : c[1]), 0);
  return (
    <tr className="h-5">
      <th
        scope="row"
        className={`border-r border-b border-[#d4d4d4] p-0 pt-[2px] pr-[5px] text-right font-normal text-gray-600 ${
          index === 0 ? "bg-[#c8ead7]" : "bg-[#f4f4f4]"
        }`}
      >
        {index + 1}
      </th>
      {cells.map((cell, i) => {
        const [text, span] = typeof cell === "string" ? [cell, 1] : cell;
        return (
          <td
            key={i}
            colSpan={span}
            className={`overflow-hidden border-r border-b border-[#d4d4d4] p-0 pt-[2px] pl-[2px] whitespace-nowrap ${
              index === 0 && i === 0 ? "outline-2 outline-[#107c41]" : ""
            }`}
          >
            {text}
          </td>
        );
      })}
      {Array.from({ length: columns.length - used + 1 }, (_, i) => (
        <td key={`e${i}`} className="border-r border-b border-[#d4d4d4]" />
      ))}
    </tr>
  );
}

function Sheet() {
  return (
    <div className="mt-[15px] flex min-h-0 flex-1 font-[Lato,sans-serif] text-[13px] leading-[17px] text-black">
      <div className="relative min-w-0 flex-1 overflow-hidden">
        <table className="w-full table-fixed border-separate border-spacing-0 bg-white">
          <colgroup>
            <col className="w-[43px]" />
            {columns.map((c) => (
              <col key={c} className="w-16" />
            ))}
            <col />
          </colgroup>
          <thead>
            <tr className="h-[19px] bg-[#f4f4f4] text-sm text-gray-600">
              <th className="border-b border-gray-400 p-0">
                <Icon w={12} h={12} className="mt-1 mr-1 ml-auto text-gray-400">
                  <path d="M12 0v12H0z" fill="currentColor" stroke="none" />
                </Icon>
              </th>
              {columns.map((c) => (
                <th
                  key={c}
                  scope="col"
                  className={`border-r border-b border-r-[#d4d4d4] border-b-gray-400 p-0 leading-[18px] font-normal ${
                    c === "A" ? "bg-[#c8ead7] text-[#217346]" : ""
                  }`}
                >
                  {c}
                </th>
              ))}
              <th className="border-b border-gray-400" />
            </tr>
          </thead>
          <tbody>
            {Array.from({ length: 32 }, (_, i) => (
              <SheetRow key={i} index={i} />
            ))}
          </tbody>
        </table>
        {/* marker strokes over rows 11 and 16 */}
        <div className="absolute top-[219px] left-[44px] h-5 w-[551px] bg-[#ff0] mix-blend-multiply" />
        <div className="absolute top-[318px] left-[43px] h-[21px] w-[389px] bg-[#ff0] mix-blend-multiply" />
      </div>
      <div className="mt-5 flex w-[15px] flex-col bg-[#e6e6e6] text-gray-500">
        <button aria-label="Nahoru" className="flex h-4 items-center justify-center border border-gray-400 bg-white">
          <Icon w={7} h={4}>
            <path d="M3.500 0L7 4H0z" fill="currentColor" stroke="none" />
          </Icon>
        </button>
        <div className="h-[334px] border border-gray-400 bg-white" />
        <button
          aria-label="Dolů"
          className="mt-auto flex h-[17px] items-center justify-center border border-gray-400 bg-white"
        >
          <Icon w={7} h={4}>
            <path d="M3.500 4L7 0H0z" fill="currentColor" stroke="none" />
          </Icon>
        </button>
      </div>
    </div>
  );
}

function Footer() {
  return (
    <>
      <div className="mr-[15px] ml-[43px] flex h-[15px] shrink-0 bg-[#e6e6e6] text-gray-500">
        <button
          aria-label="Doleva"
          className="flex w-[18px] items-center justify-center border border-gray-400 bg-white"
        >
          <Icon w={4} h={7}>
            <path d="M0 3.500L4 0v7z" fill="currentColor" stroke="none" />
          </Icon>
        </button>
        <div className="flex-1 border border-gray-400 bg-white" />
        <button
          aria-label="Doprava"
          className="ml-[55px] flex w-[17px] items-center justify-center border border-gray-400 bg-white"
        >
          <Icon w={4} h={7}>
            <path d="M4 3.500L0 0v7z" fill="currentColor" stroke="none" />
          </Icon>
        </button>
      </div>
      <div className="flex h-8 shrink-0 items-center pl-3 text-gray-400">
        <button aria-label="Předchozí list">
          <Icon w={7} h={10}>
            <path d="M6 1L1.500 5 6 9" />
          </Icon>
        </button>
        <button aria-label="Další list" className="ml-[26px]">
          <Icon w={7} h={10}>
            <path d="M1 1l4.500 4L1 9" />
          </Icon>
        </button>
        <button aria-label="Všechny listy" className="ml-[22px] text-gray-800">
          <Icon w={12} h={11}>
            <path d="M0 1.500h12M0 5.500h12M0 9.500h12" />
          </Icon>
        </button>
        <button className="ml-[19px] h-8 border-b-[3px] border-[#217346] text-[13px] font-semibold text-gray-700">
          in
        </button>
        <button aria-label="Nový list" className="ml-[18px]">
          <Icon w={11} h={11}>
            <path d="M5.500 0v11M0 5.500h11" />
          </Icon>
        </button>
      </div>
      <footer className="flex h-[23px] shrink-0 items-center border-t border-gray-200 bg-white pt-1 pr-3 pl-8 text-[11px] text-gray-600">
        <span>Statistika sešitu</span>
        <button aria-label="Možnosti" className="ml-auto">
          <Chevron className="text-gray-700" />
        </button>
        <button className="ml-[42px] whitespace-nowrap">Pošlete Microsoftu svůj názor</button>
        <button aria-label="Oddálit" className="ml-[38px] text-gray-800">
          <Icon w={12} h={12}>
            <path d="M0 6.500h12" />
          </Icon>
        </button>
        <span className="ml-[13px] whitespace-nowrap">100 %</span>
        <button aria-label="Přiblížit" className="ml-3 text-gray-800">
          <Icon w={12} h={12}>
            <path d="M6.500 0v12M0 6.500h12" />
          </Icon>
        </button>
      </footer>
    </>
  );
}

/* ---------- red guide marks drawn over the window ---------- */

function Annotations() {
  return (
    <div className="pointer-events-none absolute inset-0 z-30">
      <svg width="100%" height="100%" className="drop-shadow-[3px_3px_2px_rgba(0,0,0,0.4)]" aria-hidden="true">
        <g fill="none" stroke="#f00" strokeWidth="2">
          <rect x="1707" y="130" width="119" height="35" />
          <rect x="1574" y="166" width="263" height="49" />
          <rect x="35" y="326" width="791" height="340" />
          <path d="M1591 207L806 454" strokeWidth="1.500" />
        </g>
        <path d="M797 457l11-7 2 7z" fill="#f00" />
      </svg>
      <span className="absolute top-[112px] left-[1691px] flex size-[29px] items-center justify-center rounded-full bg-[#8b0000] text-lg text-white">
        1
      </span>
      <span className="absolute top-[203px] left-[1814px] flex size-[29px] items-center justify-center rounded-full bg-[#8b0000] text-lg text-white">
        2
      </span>
    </div>
  );
}

export default function App() {
  return (
    <div className="relative flex h-screen flex-col overflow-hidden bg-[#f4f4f4] font-['Noto_Sans','Open_Sans',sans-serif]">
      <Browser />
      <TitleRow />
      <RibbonTabs />
      <Ribbon />
      <FormulaBar />
      <Sheet />
      <Footer />
      <Annotations />
    </div>
  );
}
